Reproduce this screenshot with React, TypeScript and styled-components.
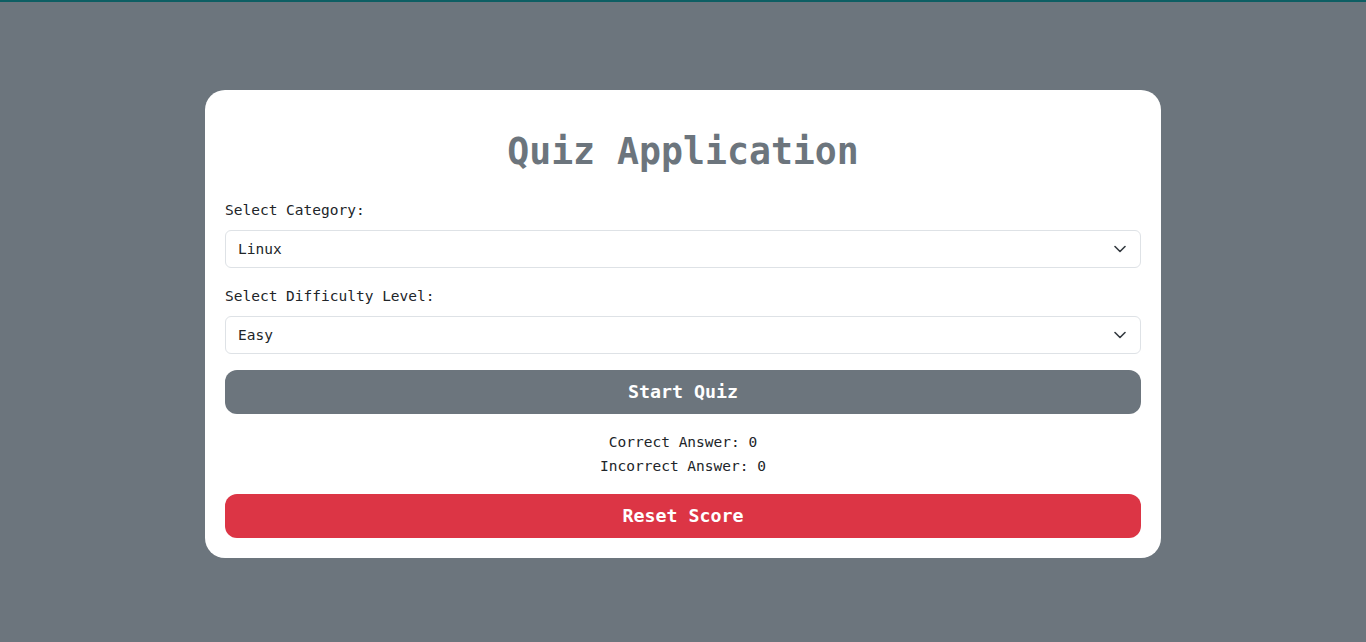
import React from "react";
import styled, { createGlobalStyle } from "styled-components";

const Global = createGlobalStyle`
  html, body { margin: 0; padding: 0; }
  body {
    background: #6c757d;
    font-family: "DejaVu Sans Mono", "Liberation Mono", monospace;
    color: #212529;
  }
  * { box-sizing: border-box; }
`;

const Page = styled.div`
  min-height: 100vh;
  border-top: 2px solid #0d5e63;
  display: flex;
  justify-content: center;
  align-items: flex-start;
  padding-top: 88px;
`;

const Card = styled.div`
  width: 956px;
  background: #ffffff;
  border-radius: 20px;
  padding: 20px;
  display: flex;
  flex-direction: column;
`;

const Title = styled.h1`
  margin: 18px 0 22px;
  font-size: 36.5px;
  line-height: 48px;
  font-weight: bold;
  color: #6c757d;
  text-align: center;
`;

const Label = styled.label`
  display: block;
  font-size: 14.5px;
  line-height: 24px;
  margin-bottom: 8px;
  color: #212529;
`;

const Field = styled.div`
  margin-bottom: 16px;
`;

const SelectBox = styled.div`
  position: relative;
  height: 38px;
  border: 1px solid #dee2e6;
  border-radius: 6px;
  display: flex;
  align-items: center;
  padding: 0 12px;
  font-size: 14.5px;
  color: #212529;
`;

const Chevron = styled.svg`
  position: absolute;
  right: 14px;
  top: 50%;
  transform: translateY(-50%);
  width: 12px;
  height: 8px;
`;

const Button = styled.button<{ $bg: string }>`
  width: 100%;
  height: 44px;
  border: none;
  border-radius: 12px;
  background: ${(p) => p.$bg};
  color: #ffffff;
  font-family: "DejaVu Sans Mono", "Liberation Mono", monospace;
  font-size: 18.3px;
  font-weight: bold;
  cursor: pointer;
  padding: 0 0 1px;
`;

const Scores = styled.div`
  margin: 16px 0;
  text-align: center;
  font-size: 14.5px;
  line-height: 24px;
  color: #212529;
`;

const Select = ({ value }: { value: string }) => (
  <SelectBox>
    {value}
    <Chevron viewBox="0 0 12 8">
      <path
        d="M1 1.5 6 6.5 11 1.5"
        fill="none"
        stroke="#343a40"
        strokeWidth="1.6"
        strokeLinecap="round"
        strokeLinejoin="round"
      />
    </Chevron>
  </SelectBox>
);

export default function App() {
  return (
    <>
      <Global />
      <Page>
        <Card>
          <Title>Quiz Application</Title>
          <Field>
            <Label>Select Category:</Label>
            <Select value="Linux" />
          </Field>
          <Field>
            <Label>Select Difficulty Level:</Label>
            <Select value="Easy" />
          </Field>
          <Button $bg="#6c757d">Start Quiz</Button>
          <Scores>
            <div>Correct Answer: 0</div>
            <div>Incorrect Answer: 0</div>
          </Scores>
          <Button $bg="#dc3545">Reset Score</Button>
        </Card>
      </Page>
    </>
  );
}
